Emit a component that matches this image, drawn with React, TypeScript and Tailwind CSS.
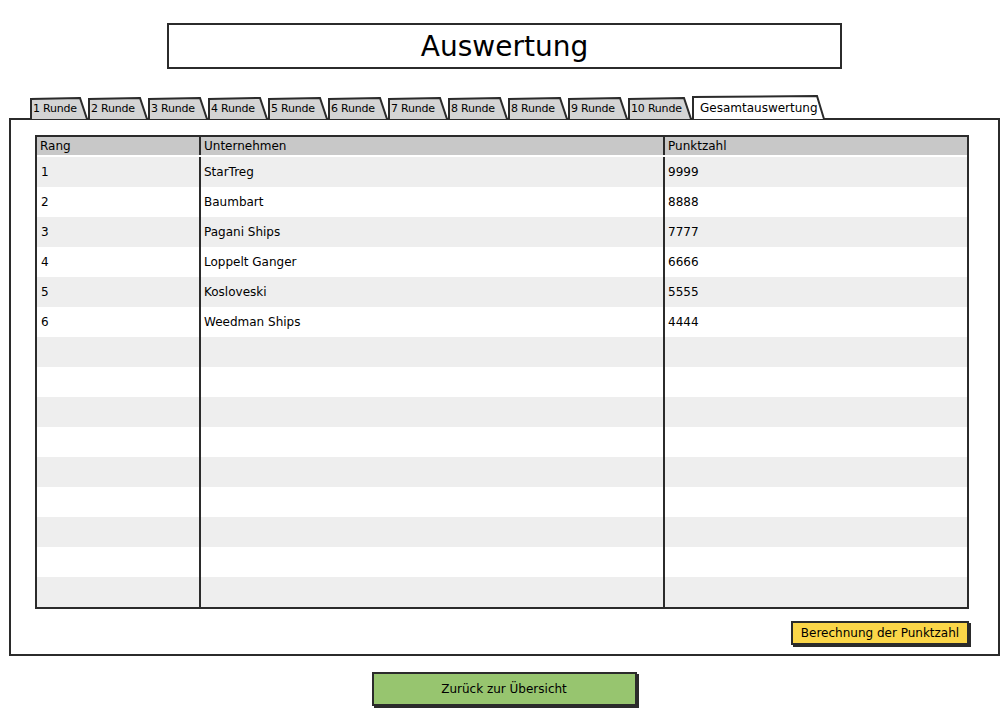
import React from 'react'

const TABS = ['1 Runde', '2 Runde', '3 Runde', '4 Runde', '5 Runde', '6 Runde', '7 Runde', '8 Runde', '8 Runde', '9 Runde', '10 Runde']

const ROWS: [string, string, string][] = [
  ['1', 'StarTreg', '9999'],
  ['2', 'Baumbart', '8888'],
  ['3', 'Pagani Ships', '7777'],
  ['4', 'Loppelt Ganger', '6666'],
  ['5', 'Kosloveski', '5555'],
  ['6', 'Weedman Ships', '4444'],
]

// Tab with a slanted right edge, sketch style
function Tab({ label, width, active }: { label: string; width: number; active?: boolean }) {
  const h = active ? 24 : 22
  return (
    <div className="relative shrink-0" style={{ width, height: h }}>
      <svg className="absolute inset-0" width={width} height={h} viewBox={`0 0 ${width} ${h}`}>
        <path
          d={`M1 ${h} L1 2 L${width - 8} 1 L${width - 1} ${h}`}
          fill={active ? '#ffffff' : '#d4d4d4'}
          stroke="#2b2b2b"
          strokeWidth="2"
        />
      </svg>
      <span
        className={`relative flex h-full items-center pt-[2px] text-black ${
          active ? 'pl-[8px] text-[12px]' : 'pl-[3px] text-[11px] tracking-[-0.2px]'
        }`}
      >
        {label}
      </span>
    </div>
  )
}

export default function App() {
  const rows = Array.from({ length: 15 }, (_, i) => ROWS[i] ?? ['', '', ''])

  return (
    <div className="w-[1008px] h-[712px] bg-white font-['DejaVu_Sans',sans-serif] text-black overflow-hidden">
      {/* Title */}
      <div className="ml-[167px] mt-[23px] flex h-[46px] w-[675px] items-center justify-center border-2 border-[#2b2b2b] pt-[2px] text-[28px]">
        Auswertung
      </div>

      {/* Tabs */}
      <div className="ml-[30px] mt-[26px] flex h-[24px] items-end">
        {TABS.map((t, i) => (
          <Tab key={i} label={t} width={i === 10 ? 64 : i === 0 ? 58 : 60} />
        ))}
        <Tab label="Gesamtauswertung" width={133} active />
      </div>

      {/* Panel */}
      <div className="ml-[9px] -mt-[1px] h-[538px] w-[991px] border-2 border-[#2b2b2b] pt-[15px] pl-[24px]">
        <div className="w-[934px] border-2 border-[#2b2b2b] text-[12px]">
          <div className="flex h-[20px] bg-[#c8c8c8] border-b-2 border-white">
            <div className="w-[164px] border-r-2 border-[#2b2b2b] pl-[3px] leading-[18px]">Rang</div>
            <div className="w-[464px] border-r-2 border-[#2b2b2b] pl-[3px] leading-[18px]">Unternehmen</div>
            <div className="flex-1 pl-[3px] leading-[18px]">Punktzahl</div>
          </div>
          {rows.map((r, i) => (
            <div key={i} className={`flex h-[30px] items-center ${i % 2 === 0 ? 'bg-[#eeeeee]' : 'bg-white'}`}>
              <div className="h-full w-[164px] border-r-2 border-[#2b2b2b] pl-[4px] leading-[30px]">{r[0]}</div>
              <div className="h-full w-[464px] border-r-2 border-[#2b2b2b] pl-[3px] leading-[30px]">{r[1]}</div>
              <div className="h-full flex-1 pl-[3px] leading-[30px]">{r[2]}</div>
            </div>
          ))}
        </div>

        <div className="mt-[12px] flex w-[934px] justify-end">
          <button className="h-[24px] w-[178px] border-2 border-[#2b2b2b] bg-[#fbd648] text-[12px] shadow-[2px_2px_0_#2b2b2b]">
            Berechnung der Punktzahl
          </button>
        </div>
      </div>

      {/* Back button */}
      <div className="mt-[16px] flex justify-center">
        <button className="h-[34px] w-[265px] border-2 border-[#2b2b2b] bg-[#97c56f] text-[12px] shadow-[2px_2px_0_#2b2b2b]">
          Zurück zur Übersicht
        </button>
      </div>
    </div>
  )
}
